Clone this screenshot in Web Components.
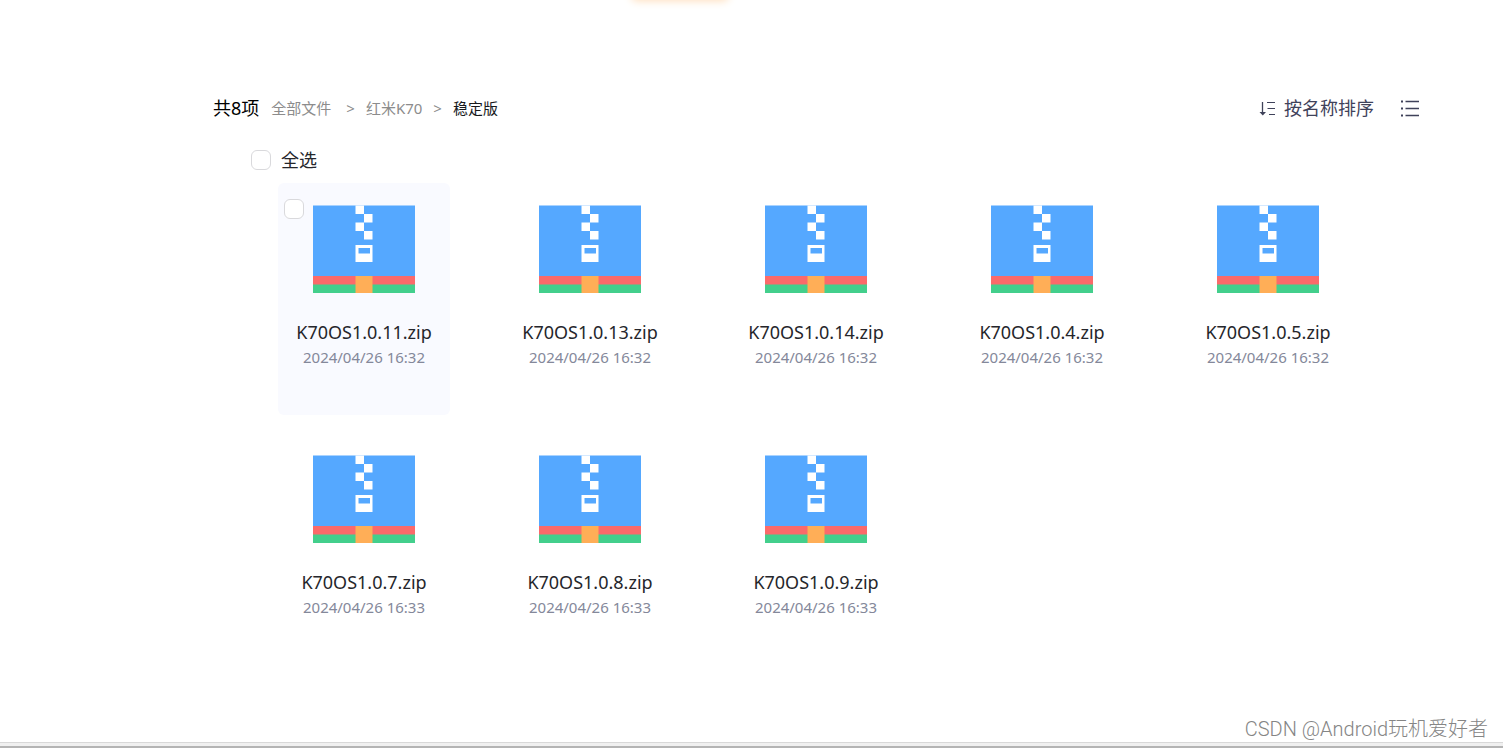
<!DOCTYPE html>
<html lang="zh-CN">
<head>
<meta charset="UTF-8">
<meta name="viewport" content="width=device-width, initial-scale=1">
<title>稳定版</title>
<style>
  body {
    margin: 0;
    background: #fff;
    color: #25262b;
    font-family: "Noto Sans", "Noto Sans CJK SC", sans-serif;
  }
</style>
</head>
<body>
<file-browser></file-browser>

<script>
const files = [
  { name: "K70OS1.0.11.zip", time: "2024/04/26 16:32", active: true },
  { name: "K70OS1.0.13.zip", time: "2024/04/26 16:32" },
  { name: "K70OS1.0.14.zip", time: "2024/04/26 16:32" },
  { name: "K70OS1.0.4.zip", time: "2024/04/26 16:32" },
  { name: "K70OS1.0.5.zip", time: "2024/04/26 16:32" },
  { name: "K70OS1.0.7.zip", time: "2024/04/26 16:33" },
  { name: "K70OS1.0.8.zip", time: "2024/04/26 16:33" },
  { name: "K70OS1.0.9.zip", time: "2024/04/26 16:33" },
];

/**
 * Rounded tick box with an optional slotted label.
 * @class CheckBox
 * @extends HTMLElement
 */
class CheckBox extends HTMLElement {
  constructor() {
    super();
    this.attachShadow({ mode: "open" });
  }

  connectedCallback() {
    this.shadowRoot.innerHTML = `
      <style>
        :host { display: block; }
        label {
          display: flex;
          align-items: center;
          gap: 10px;
          width: max-content;
          font-size: 18px;
          line-height: 24px;
        }
        input {
          appearance: none;
          box-sizing: border-box;
          width: 20px;
          height: 20px;
          margin: 0;
          border: 1px solid #d9d9dc;
          border-radius: 6px;
          background: #fff;
        }
        input:checked { background: #637dff; border-color: #637dff; }
      </style>
      <label><input type="checkbox"><slot></slot></label>
    `;
    const name = this.getAttribute("label");
    if (name) {
      this.shadowRoot.querySelector("input").setAttribute("aria-label", name);
    }
  }
}

/**
 * Archive picture used for zip files.
 * @class ZipIcon
 * @extends HTMLElement
 */
class ZipIcon extends HTMLElement {
  constructor() {
    super();
    this.attachShadow({ mode: "open" });
  }

  connectedCallback() {
    this.shadowRoot.innerHTML = `
      <style>
        :host { display: block; }
        svg { display: block; width: 102px; height: 88px; }
      </style>
      <svg viewBox="0 0 102 88" aria-hidden="true">
        <path fill="#43cf8c" d="M0 71h102v17H0z"/>
        <path fill="#fb6a6a" d="M0 70h102v9.500H0z"/>
        <path fill="#55a8ff" d="M0 .5h102V71H0z"/>
        <path fill="#ffae57" d="M42.500 71h17v17h-17z"/>
        <path fill="#fff" d="M42.500 .5H51V9h-8.500zM51 9h8.500v8.500H51zM42.500 17.500H51V26h-8.500zM51 26h8.500v8.500H51z"/>
        <path fill="#fff" fill-rule="evenodd" d="M42.500 40h17v17h-17zM45.500 43v5.500h11.500V43z"/>
      </svg>
    `;
  }
}

/**
 * One file in the grid.
 * @class FileCard
 * @extends HTMLElement
 */
class FileCard extends HTMLElement {
  constructor() {
    super();
    this.attachShadow({ mode: "open" });
  }

  connectedCallback() {
    const name = this.getAttribute("name");
    this.shadowRoot.innerHTML = `
      <style>
        :host {
          position: relative;
          display: flex;
          flex-direction: column;
          align-items: center;
          box-sizing: border-box;
          min-height: 232px;
          padding-top: 22px;
          border-radius: 6px;
        }
        :host([active]), :host(:hover) { background: #f9faff; }
        check-box {
          position: absolute;
          top: 16px;
          left: 6px;
          display: none;
        }
        :host([active]) check-box, :host(:hover) check-box { display: block; }
        .name {
          margin-top: 26px;
          font-size: 18px;
          line-height: 26px;
          color: #25262b;
          text-decoration: none;
        }
        time {
          font-size: 15px;
          line-height: 24px;
          color: #84889a;
        }
      </style>
      <check-box label="${name}"></check-box>
      <zip-icon></zip-icon>
      <a class="name" href="#">${name}</a>
      <time>${this.getAttribute("time")}</time>
    `;
  }
}

/**
 * Path of folders, last one current.
 * @class CrumbTrail
 * @extends HTMLElement
 */
class CrumbTrail extends HTMLElement {
  constructor() {
    super();
    this.attachShadow({ mode: "open" });
  }

  connectedCallback() {
    this.shadowRoot.innerHTML = `
      <style>
        :host { display: block; }
        nav {
          display: flex;
          align-items: center;
          font-size: 15px;
          line-height: 24px;
          color: #8c8c8c;
        }
        a { color: inherit; text-decoration: none; }
        .sep { margin: 0 11px; font-size: 15px; }
        .root { margin-right: 4px; }
        .current { color: #18191c; }
      </style>
      <nav>
        <a class="root" href="#">全部文件</a><span class="sep">&gt;</span>
        <a href="#">红米K70</a><span class="sep">&gt;</span>
        <span class="current">稳定版</span>
      </nav>
    `;
  }
}

/**
 * Sort order and view mode buttons.
 * @class ViewTools
 * @extends HTMLElement
 */
class ViewTools extends HTMLElement {
  constructor() {
    super();
    this.attachShadow({ mode: "open" });
  }

  connectedCallback() {
    this.shadowRoot.innerHTML = `
      <style>
        :host { display: flex; align-items: center; gap: 26px; }
        button {
          display: flex;
          align-items: center;
          gap: 8px;
          padding: 0;
          border: 0;
          background: none;
          color: #3f425a;
          font: inherit;
          font-size: 18px;
          line-height: 24px;
        }
        svg { display: block; fill: none; stroke: currentColor; }
      </style>
      <button type="button">
        <svg width="17" height="16" viewBox="0 0 17 16" aria-hidden="true">
          <path stroke-width="1.300" d="M3.500 2v12"/>
          <path fill="currentColor" stroke="none" d="M.5 12h6.500l-3.200 3.500z"/>
          <path stroke-width="1.200" d="M8 2.500h8M8.500 8.500H16M10 14.500h6"/>
        </svg>
        按名称排序
      </button>
      <button type="button" aria-label="列表">
        <svg width="19" height="18" viewBox="0 0 19 18" aria-hidden="true">
          <path stroke-width="1.300" d="M5.500 2.500H19M5.500 9.500H19M5.500 16.500H19"/>
          <path stroke-width="2" d="M1 2.500h2M1 9.500h2M1 16.500h2"/>
        </svg>
      </button>
    `;
  }
}

/**
 * Whole page: toolbar, select all, grid and footer.
 * @class FileBrowser
 * @extends HTMLElement
 */
class FileBrowser extends HTMLElement {
  constructor() {
    super();
    this.attachShadow({ mode: "open" });
  }

  connectedCallback() {
    this.render();
    this.renderFiles();
  }

  render() {
    this.shadowRoot.innerHTML = `
      <style>
        :host {
          display: flex;
          flex-direction: column;
          min-height: 100vh;
          overflow: hidden;
        }
        .glow {
          position: absolute;
          top: -10px;
          left: 632px;
          width: 96px;
          height: 10px;
          border-radius: 6px;
          box-shadow: 0 0 9px 1px #ffdfbd;
        }
        main { padding: 96px 84px 0 213px; }
        .toolbar { display: flex; align-items: center; }
        .total {
          margin: 0 12px 0 0;
          font-size: 18px;
          font-weight: 400;
          line-height: 24px;
          color: #000;
        }
        view-tools { margin-left: auto; }
        .all { margin: 28px 0 11px 38px; }
        .grid {
          display: grid;
          grid-template-columns: repeat(auto-fill, 172px);
          gap: 18px 54px;
          margin-left: 65px;
        }
        footer { margin-top: auto; }
        .mark {
          margin: 0 15px 0 0;
          font-family: Roboto, "Noto Sans CJK SC", sans-serif;
          font-size: 20px;
          font-weight: 300;
          line-height: 26px;
          text-align: right;
          color: #858585;
        }
        .edge {
          height: 3px;
          border-top: 1px solid #d8d8d8;
          border-bottom: 2px solid #b4b4b4;
          background: #f0f0f0;
        }
      </style>
      <div class="glow"></div>
      <main>
        <div class="toolbar">
          <h1 class="total">共8项</h1>
          <crumb-trail></crumb-trail>
          <view-tools></view-tools>
        </div>
        <check-box class="all">全选</check-box>
        <div class="grid" data-grid></div>
      </main>
      <footer>
        <p class="mark">CSDN @Android玩机爱好者</p>
        <div class="edge"></div>
      </footer>
    `;
  }

  renderFiles() {
    const grid = this.shadowRoot.querySelector("[data-grid]");
    files.forEach((file) => {
      const card = document.createElement("file-card");
      card.setAttribute("name", file.name);
      card.setAttribute("time", file.time);
      card.toggleAttribute("active", Boolean(file.active));
      grid.appendChild(card);
    });
  }
}

customElements.define("check-box", CheckBox);
customElements.define("zip-icon", ZipIcon);
customElements.define("file-card", FileCard);
customElements.define("crumb-trail", CrumbTrail);
customElements.define("view-tools", ViewTools);
customElements.define("file-browser", FileBrowser);
</script>
</body>
</html>
